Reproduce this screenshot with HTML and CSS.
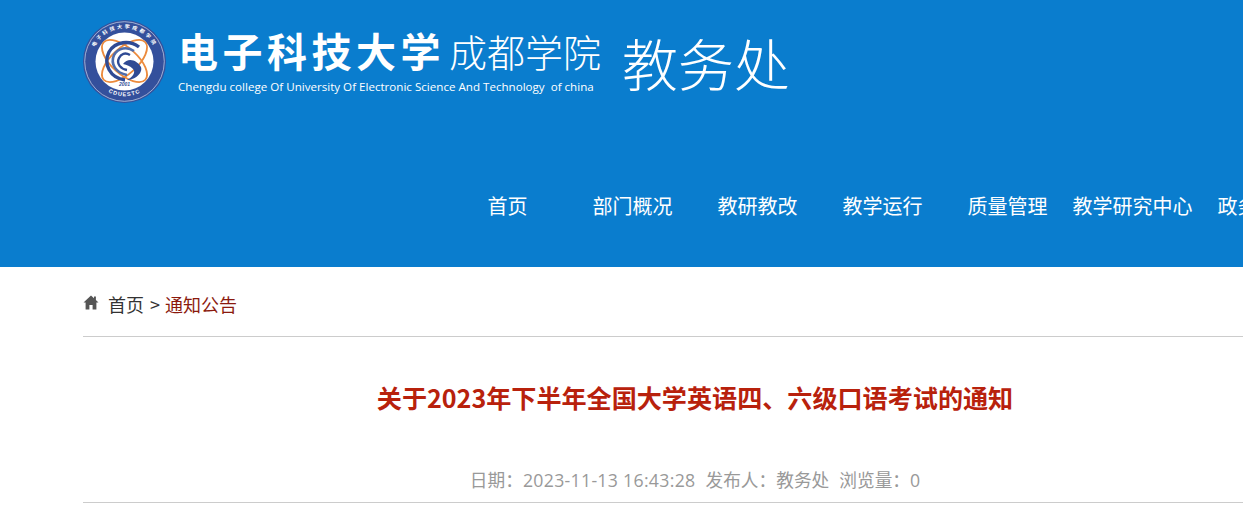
FILE: index.html
```html
<!DOCTYPE html>
<html>
    <head>
        <meta charset="UTF-8">
        <title>关于2023年下半年全国大学英语四、六级口语考试的通知</title>
        <link rel="stylesheet" href="styles.css">
    </head>
    <body>
        <div class="header">
            <div class="brand">
                <svg class="logo" width="83" height="83" viewBox="0 0 83 83">
                    <defs>
                        <path id="ringTop" d="M9 47 A33 33 0 1 1 74 47"></path>
                        <path id="ringBottom" d="M12 60 A35 35 0 0 0 71 60"></path>
                    </defs>
                    <circle cx="41.5" cy="41.5" r="41.5" fill="#34509c"></circle>
                    <circle cx="41.5" cy="41.5" r="39.8" fill="none" stroke="#cfd8ea" stroke-width="0.7"></circle>
                    <circle cx="41.5" cy="41.5" r="29" fill="#fff"></circle>
                    <ellipse cx="41.5" cy="41" rx="28" ry="13" fill="none" stroke="#ec8a3c" stroke-width="1.8" transform="rotate(42 41.5 41)"></ellipse>
                    <ellipse cx="41.5" cy="41" rx="28" ry="13" fill="none" stroke="#ec8a3c" stroke-width="1.8" transform="rotate(-42 41.5 41)"></ellipse>
                    <path d="M56 27 C47 20 32 21 26 32 C20 44 27 58 42 60" fill="none" stroke="#2f4a94" stroke-width="3.4"></path>
                    <path d="M51 31 C44 26 35 28 31 35 C27 44 33 53 44 55" fill="none" stroke="#4e6cab" stroke-width="2.6"></path>
                    <path d="M47 35 C42 32 38 34 36 38 C33 44 38 49 44 50" fill="none" stroke="#2f4a94" stroke-width="2.4"></path>
                    <path d="M40 44 C45 37 54 40 58 47 C60 53 52 60 44 60 C50 57 53 52 50 49 C47 46 44 45 40 44 Z" fill="#2f4a94"></path>
                    <text class="logoRing" fill="#fff"><textPath href="#ringTop" startOffset="50%" text-anchor="middle">电子科技大学成都学院</textPath></text>
                    <text class="logoYear" x="41.5" y="66" text-anchor="middle" fill="#2f4a94">2001</text>
                    <text class="logoCode" fill="#fff"><textPath href="#ringBottom" startOffset="50%" text-anchor="middle">CDUESTC</textPath></text>
                </svg>
                <div class="brandText">
                    <div class="brandTop">
                        <span class="brandCn">电子科技大学</span>
                        <span class="brandCollege">成都学院</span>
                    </div>
                    <div class="brandEn">Chengdu college Of University Of Electronic Science And Technology&nbsp; of china</div>
                </div>
                <div class="brandDept">教务处</div>
            </div>
            <div class="nav">
                <a class="navItem">首页</a>
                <a class="navItem">部门概况</a>
                <a class="navItem">教研教改</a>
                <a class="navItem">教学运行</a>
                <a class="navItem">质量管理</a>
                <a class="navItem">教学研究中心</a>
                <a class="navItem">政务公开</a>
            </div>
        </div>

        <div class="content">
            <div class="crumbs">
                <svg class="homeIcon" width="16" height="15" viewBox="0 0 16 15">
                    <path d="M8 0.5 L0.5 7.6 L2.6 7.6 L2.6 14.5 L6.4 14.5 L6.4 10 L9.6 10 L9.6 14.5 L13.4 14.5 L13.4 7.6 L15.5 7.6 L12.9 5.1 L12.9 1.4 L11 1.4 L11 3.3 Z" fill="#555"></path>
                </svg>
                <a class="crumbLink">首页</a>
                <span class="crumbSep">&gt;</span>
                <a class="crumbNow">通知公告</a>
            </div>
            <h1 class="title">关于2023年下半年全国大学英语四、六级口语考试的通知</h1>
            <div class="meta">
                <span>日期：<span class="metaDate">2023-11-13 16:43:28</span></span>
                <span>发布人：教务处</span>
                <span>浏览量：0</span>
            </div>
        </div>
    </body>
</html>
```

FILE: styles.css
```css
html, body {
    margin: 0;
    padding: 0;
    height: 520px;
    overflow: hidden;
}

body {
    background: #ffffff;
    font-family: "Liberation Sans", "Noto Sans CJK SC", sans-serif;
    color: #333333;
}

.header {
    background: #0a7dce;
    height: 267px;
    box-sizing: border-box;
    padding-top: 20px;
    color: #ffffff;
}

.brand {
    display: flex;
    padding-left: 83px;
    height: 83px;
}

.logo {
    flex: none;
}

.logoRing {
    font-family: "Noto Sans CJK SC", sans-serif;
    font-size: 5px;
    font-weight: 700;
    letter-spacing: 2.4px;
}

.logoYear {
    font-family: "Liberation Sans", sans-serif;
    font-size: 5px;
    font-style: italic;
    font-weight: 700;
}

.logoCode {
    font-family: "Liberation Sans", sans-serif;
    font-size: 5.5px;
    font-weight: 700;
    letter-spacing: 1px;
}

.brandText {
    margin-left: 12px;
    width: 430px;
}

.brandTop {
    display: flex;
    align-items: center;
    height: 60px;
}

.brandCn {
    width: 271px;
    font-family: "Noto Sans CJK SC", sans-serif;
    font-size: 40px;
    font-weight: 700;
    letter-spacing: 4.5px;
    white-space: nowrap;
}

.brandCollege {
    font-family: "Noto Sans CJK SC", sans-serif;
    font-size: 38px;
    font-weight: 300;
    white-space: nowrap;
}

.brandEn {
    font-family: "Open Sans", sans-serif;
    font-size: 11.6px;
    line-height: 14px;
    white-space: nowrap;
}

.brandDept {
    margin-left: 14px;
    padding-top: 9px;
    font-family: "Noto Sans CJK SC", sans-serif;
    font-size: 56px;
    font-weight: 300;
    line-height: 66px;
    white-space: nowrap;
}

.nav {
    display: flex;
    margin-top: 83px;
    padding-left: 445px;
    font-size: 20px;
    line-height: 40px;
    font-family: "Noto Sans CJK SC", sans-serif;
}

.navItem {
    flex: none;
    width: 125px;
    text-align: center;
    white-space: nowrap;
}

.content {
    margin-left: 83px;
    width: 1224px;
}

.crumbs {
    display: flex;
    align-items: center;
    height: 65px;
    padding-top: 4px;
    border-bottom: 1px solid #cccccc;
    font-family: "Noto Sans CJK SC", sans-serif;
    font-size: 18px;
}

.homeIcon {
    margin: -2px 9px 0 0;
}

.crumbSep {
    margin: 0 5px 0 6px;
}

.crumbNow {
    color: #8b1a0e;
}

.title {
    margin: 0;
    padding-top: 41px;
    font-family: "Noto Sans CJK SC", sans-serif;
    font-size: 25.1px;
    line-height: 38px;
    font-weight: 700;
    text-align: center;
    color: #b8210c;
}

.meta {
    display: flex;
    justify-content: center;
    gap: 10px;
    margin-top: 49px;
    height: 37px;
    line-height: 30px;
    border-bottom: 1px solid #cccccc;
    font-family: "Open Sans", "Noto Sans CJK SC", sans-serif;
    font-size: 17.7px;
    color: #999999;
}

.metaDate {
    letter-spacing: 0.3px;
}
```
